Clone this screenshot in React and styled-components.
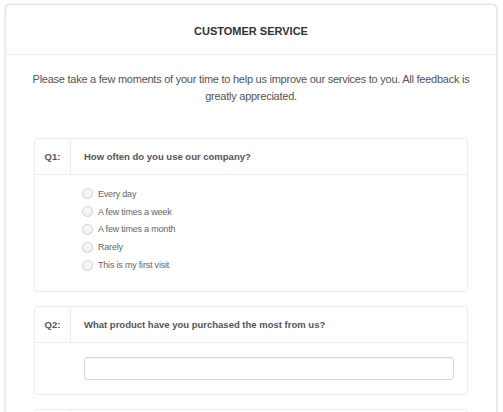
import React from 'react';
import styled, { createGlobalStyle } from 'styled-components';

const questions = [
  {
    id: 'Q1',
    text: 'How often do you use our company?',
    type: 'radio',
    options: ['Every day', 'A few times a week', 'A few times a month', 'Rarely', 'This is my first visit'],
  },
  {
    id: 'Q2',
    text: 'What product have you purchased the most from us?',
    type: 'text',
  },
  {
    id: 'Q3',
    text: 'How satisfied are you with our customer service?',
    type: 'text',
  },
];

function App() {
  return (
    <>
      <Global />
      <Page>
        <Card>
          <Header>
            <Title>CUSTOMER SERVICE</Title>
          </Header>
          <Body>
            <Intro>
              Please take a few moments of your time to help us improve our services to you. All feedback is
              <br />
              greatly appreciated.
            </Intro>
            <QuestionList>
              {questions.map((q) => (
                <QuestionBox key={q.id}>
                  <QuestionHead>
                    <QLabel>{q.id}:</QLabel>
                    <QText>{q.text}</QText>
                  </QuestionHead>
                  {q.type === 'radio' ? (
                    <OptionList>
                      {q.options.map((o) => (
                        <Option key={o}>
                          <Radio type="radio" name={q.id} />
                          {o}
                        </Option>
                      ))}
                    </OptionList>
                  ) : (
                    <InputWrap>
                      <TextInput type="text" />
                    </InputWrap>
                  )}
                </QuestionBox>
              ))}
            </QuestionList>
          </Body>
        </Card>
      </Page>
    </>
  );
}

export default App;

const Global = createGlobalStyle`
  html, body {
    margin: 0;
    padding: 0;
    background: #fff;
    overflow: hidden;
  }
  body {
    font-family: "Liberation Sans", Arial, sans-serif;
  }
`;

const Page = styled.div`
  padding: 4px 5px 0 5px;
  height: 412px;
  box-sizing: border-box;
  overflow: hidden;
`;

const Card = styled.div`
  width: 492px;
  border: 1px solid #e4e4e4;
  border-radius: 5px;
  box-shadow: 0 0 2px rgba(0, 0, 0, 0.18);
  background: #fff;
  box-sizing: border-box;
`;

const Header = styled.div`
  height: 49px;
  display: flex;
  align-items: center;
  justify-content: center;
  border-bottom: 1px solid #ececec;
`;

const Title = styled.div`
  font-size: 11px;
  font-weight: 700;
  color: #333;
  padding-top: 2px;
`;

const Body = styled.div`
  padding: 16px 28px 0 28px;
`;

const Intro = styled.p`
  margin: 0 -4px;
  font-size: 11px;
  letter-spacing: -0.25px;
  line-height: 17px;
  color: #555;
  text-align: center;
  white-space: nowrap;
`;

const QuestionList = styled.div`
  margin-top: 33px;
  display: flex;
  flex-direction: column;
  gap: 14px;
`;

const QuestionBox = styled.div`
  border: 1px solid #ececec;
  border-radius: 3px;
`;

const QuestionHead = styled.div`
  display: flex;
  height: 35px;
  border-bottom: 1px solid #ececec;
`;

const QLabel = styled.div`
  width: 35px;
  flex-shrink: 0;
  border-right: 1px solid #ececec;
  display: flex;
  align-items: center;
  justify-content: center;
  font-size: 9.5px;
  font-weight: 700;
  color: #555;
`;

const QText = styled.div`
  display: flex;
  align-items: center;
  padding-left: 13px;
  font-size: 9.5px;
  font-weight: 700;
  color: #555;
`;

const OptionList = styled.div`
  display: flex;
  flex-direction: column;
  padding: 10px 0 17px 47px;
`;

const Option = styled.label`
  display: flex;
  align-items: center;
  gap: 5px;
  height: 17.8px;
  font-size: 9px;
  color: #666;
  letter-spacing: -0.2px;
`;

const Radio = styled.input`
  appearance: none;
  width: 11px;
  height: 11px;
  margin: 0;
  border: 1px solid #cfcfcf;
  border-radius: 50%;
  background: linear-gradient(#fafafa, #f0f0f0);
  box-sizing: border-box;
`;

const InputWrap = styled.div`
  padding: 14px 13px 14px 49px;
`;

const TextInput = styled.input`
  display: block;
  width: 100%;
  height: 23px;
  box-sizing: border-box;
  border: 1px solid #d9d9d9;
  border-radius: 3px;
  box-shadow: inset 0 1px 1px rgba(0, 0, 0, 0.05);
  background: #fff;
  outline: none;
`;
